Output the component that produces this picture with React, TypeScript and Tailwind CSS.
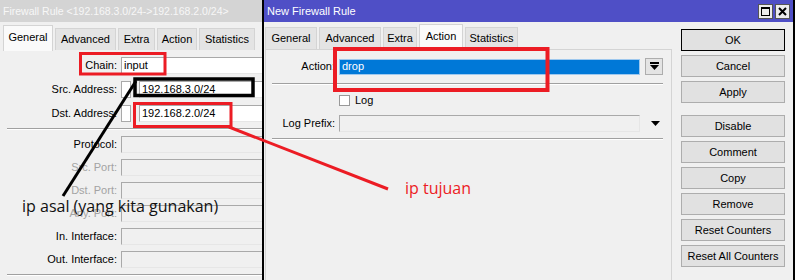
import * as React from "react"

const leftTabs = [
  { name: "General", w: "w-[50px]", active: true },
  { name: "Advanced", w: "w-[61px]" },
  { name: "Extra", w: "w-[37px]" },
  { name: "Action", w: "w-[40px]" },
  { name: "Statistics", w: "w-[56px]" },
]

const rightTabs = [
  { name: "General", w: "w-[52px]" },
  { name: "Advanced", w: "w-[62px]" },
  { name: "Extra", w: "w-[34px]" },
  { name: "Action", w: "w-[44px]", active: true },
  { name: "Statistics", w: "w-[53px]" },
]

const actionButtons = ["Disable", "Comment", "Copy", "Remove", "Reset Counters", "Reset All Counters"]

type Tab = { name: string; w: string; active?: boolean }

function Tabs({ tabs }: { tabs: Tab[] }) {
  return (
    <div className="flex items-end gap-[2px]">
      {tabs.map((t) =>
        t.active ? (
          <div
            key={t.name}
            className={`${t.w} h-[26px] -mb-px flex items-center justify-center border border-b-0 border-[#d4d4d4] bg-[#fafafa] pb-[2px]`}
          >
            {t.name}
          </div>
        ) : (
          <div
            key={t.name}
            className={`${t.w} h-[22px] flex items-center justify-center border border-b-0 border-[#d4d4d4] bg-[#e4e4e4]`}
          >
            {t.name}
          </div>
        ),
      )}
    </div>
  )
}

function Field({ value, disabled, className = "" }: { value?: string; disabled?: boolean; className?: string }) {
  return (
    <div
      className={`h-[17px] border border-[#a9a9a9] border-b-[#e6e6e6] border-r-[#e6e6e6] flex items-center pl-[2px] text-black ${
        disabled ? "bg-[#f0f0f0]" : "bg-white"
      } ${className}`}
    >
      {value}
    </div>
  )
}

function Row({ label, dim, children }: { label: string; dim?: boolean; children: React.ReactNode }) {
  return (
    <div className="flex h-[17px] items-center">
      <span className={`w-[117px] shrink-0 text-right ${dim ? "text-[#a3a3a3]" : "text-black"}`}>{label}</span>
      <div className="ml-[4px] flex flex-1 gap-[8px]">{children}</div>
    </div>
  )
}

function Separator({ className = "" }: { className?: string }) {
  return (
    <div className={className}>
      <div className="h-px bg-[#a0a0a0]" />
      <div className="h-px bg-white" />
    </div>
  )
}

function Btn({ label, primary }: { label: string; primary?: boolean }) {
  return (
    <div
      className={`h-[22px] flex items-center justify-center bg-[#e1e1e1] border ${
        primary ? "border-black" : "border-[#adadad]"
      }`}
    >
      {label}
    </div>
  )
}

function FirewallRuleWindow() {
  return (
    <div className="w-[262px] shrink-0 flex flex-col overflow-hidden">
      <div className="h-[22px] bg-[#d4d4d4] pl-[3px] flex items-center text-[10.5px] text-[#f7f7f7] whitespace-nowrap">
        Firewall Rule &lt;192.168.3.0/24-&gt;192.168.2.0/24&gt;
      </div>
      <div className="h-[28px] flex items-end pl-[3px]">
        <Tabs tabs={leftTabs} />
      </div>
      <div className="flex flex-col pt-[7px] gap-[7px]">
        <Row label="Chain:">
          <Field value="input" className="w-[170px]" />
        </Row>
        <Row label="Src. Address:">
          <div className="w-[10px] h-[17px] border border-[#a9a9a9] bg-white" />
          <Field value="192.168.3.0/24" className="w-[140px]" />
        </Row>
        <Row label="Dst. Address:">
          <div className="w-[10px] h-[17px] border border-[#a9a9a9] bg-white" />
          <Field value="192.168.2.0/24" className="w-[140px]" />
        </Row>
      </div>
      <Separator className="ml-[7px] mt-[6px]" />
      <div className="flex flex-col pt-[6px] gap-[6px]">
        <Row label="Protocol:">
          <Field disabled className="w-[170px]" />
        </Row>
        <Row label="Src. Port:" dim>
          <Field disabled className="w-[170px]" />
        </Row>
        <Row label="Dst. Port:" dim>
          <Field disabled className="w-[170px]" />
        </Row>
        <Row label="Any. Port:" dim>
          <Field disabled className="w-[170px]" />
        </Row>
        <Row label="In. Interface:">
          <Field disabled className="w-[170px]" />
        </Row>
        <Row label="Out. Interface:">
          <Field disabled className="w-[170px]" />
        </Row>
      </div>
      <Separator className="ml-[7px] mt-[6px]" />
    </div>
  )
}

function NewRuleWindow() {
  return (
    <div className="w-[533px] shrink-0 flex flex-col border-x-2 border-black">
      <div className="h-[22px] bg-[#4f4fc6] flex items-center justify-between pl-[3px] pr-[3px] text-white">
        <span>New Firewall Rule</span>
        <div className="flex gap-[2px]">
          <div className="w-[15px] h-[15px] bg-[#ececec] border border-[#555] flex items-center justify-center">
            <div className="w-[9px] h-[9px] border border-black border-t-2" />
          </div>
          <div className="w-[15px] h-[15px] bg-[#ececec] border border-[#555] flex items-center justify-center">
            <svg width="9" height="9" viewBox="0 0 9 9">
              <path d="M1 1 L8 8 M8 1 L1 8" stroke="black" strokeWidth="2" />
            </svg>
          </div>
        </div>
      </div>
      <div className="flex flex-1">
        <div className="w-[408px] flex flex-col">
          <div className="h-[27px] flex items-end pl-[1px]">
            <Tabs tabs={rightTabs} />
          </div>
          <div className="flex-1 ml-[1px] border-l border-t border-r border-[#d4d4d4] flex flex-col">
            <div className="flex items-center mt-[8px] h-[17px]">
              <span className="w-[69px] text-right">Action:</span>
              <div className="ml-[4px] w-[301px] h-[16px] bg-[#0078d7] text-white flex items-center pl-[2px] border border-[#9ec8ee]">
                drop
              </div>
              <div className="ml-[5px] w-[18px] h-[17px] bg-[#e4e4e4] border border-[#adadad] flex items-center justify-center">
                <svg width="9" height="9" viewBox="0 0 9 9">
                  <rect x="0" y="0" width="9" height="2" fill="black" />
                  <path d="M0 3 H9 L4.5 8 Z" fill="black" />
                </svg>
              </div>
            </div>
            <Separator className="ml-[6px] mr-[8px] mt-[8px]" />
            <div className="flex items-center mt-[9px] h-[13px] pl-[73px]">
              <div className="w-[11px] h-[11px] border border-[#999] bg-white" />
              <span className="ml-[5px]">Log</span>
            </div>
            <div className="flex items-center mt-[8px] h-[17px]">
              <span className="w-[69px] text-right">Log Prefix:</span>
              <Field disabled className="ml-[4px] w-[301px]" />
              <svg className="ml-[11px]" width="9" height="5" viewBox="0 0 9 5">
                <path d="M0 0 H9 L4.5 5 Z" fill="black" />
              </svg>
            </div>
            <Separator className="ml-[6px] mr-[8px] mt-[6px]" />
          </div>
        </div>
        <div className="ml-[9px] w-[104px] pt-[7px] flex flex-col gap-[4px]">
          <Btn label="OK" primary />
          <Btn label="Cancel" />
          <Btn label="Apply" />
          <div className="h-[4px]" />
          {actionButtons.map((b) => (
            <Btn key={b} label={b} />
          ))}
        </div>
      </div>
    </div>
  )
}

export default function App() {
  return (
    <div className="relative w-[798px] h-[280px] overflow-hidden flex bg-[#f0f0f0] text-[11px] leading-none font-['Liberation_Sans',Arial,sans-serif] text-black">
      <FirewallRuleWindow />
      <NewRuleWindow />
      <div className="w-[3px] bg-white" />

      {/* annotations drawn over the screenshot */}
      <svg className="absolute inset-0 pointer-events-none" width="798" height="280">
        <rect x="80.5" y="53.5" width="84.5" height="20.5" fill="none" stroke="#ec1c24" strokeWidth="3" />
        <rect x="135" y="79" width="118" height="16.5" fill="none" stroke="black" strokeWidth="3.5" />
        <rect x="134.5" y="103.5" width="96.5" height="23" fill="none" stroke="#ec1c24" strokeWidth="3" />
        <rect x="335" y="49" width="212.5" height="41" fill="none" stroke="#ec1c24" strokeWidth="4" />
        <line x1="136" y1="81" x2="63" y2="196" stroke="black" strokeWidth="3" />
        <line x1="229" y1="127" x2="388" y2="189" stroke="#ec1c24" strokeWidth="3" />
      </svg>
      <span className="absolute left-[22px] top-[196px] text-[16px] leading-[20px] font-['Open_Sans',sans-serif] text-[#111]">
        ip asal (yang kita gunakan)
      </span>
      <span className="absolute left-[405px] top-[178px] text-[16px] leading-[20px] font-['Open_Sans',sans-serif] text-[#ec1c24]">
        ip tujuan
      </span>
    </div>
  )
}
